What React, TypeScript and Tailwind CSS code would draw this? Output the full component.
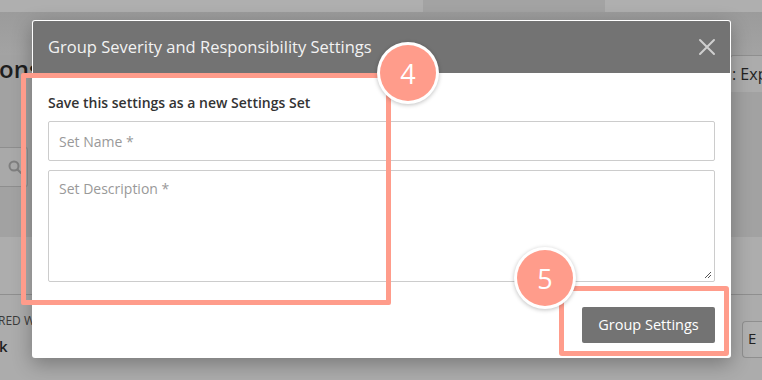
import React from "react";

const font = { fontFamily: '"Open Sans", "Noto Sans", sans-serif' };

function Badge({ n }: { n: string }) {
  return (
    <div className="w-[62px] h-[62px] rounded-full bg-white p-[3px] shadow-[0_1px_4px_rgba(0,0,0,0.25)]">
      <div className="w-full h-full rounded-full bg-[#ff9c8b] flex items-center justify-center text-white text-[27px] leading-none">
        {n}
      </div>
    </div>
  );
}

export default function App() {
  return (
    <div className="relative w-[762px] h-[380px] overflow-hidden bg-[#a2a2a2]" style={font}>
      {/* dimmed background page */}
      <div className="flex flex-col w-full h-full">
        <div className="flex h-[12px] bg-[#afafaf]">
          <div className="w-[423px]" />
          <div className="w-[182px] h-[19px] bg-[#a3a3a3]" />
        </div>
        <div className="h-[43px] bg-gradient-to-b from-[#9b9b9b] to-[#a3a3a3]" />
        <div className="flex h-[28px] items-center justify-between">
          <div className="text-[24px] font-semibold text-[#1e1e1e] -ml-[1px] leading-none">ons</div>
          <div className="h-[37px] w-[32px] mt-[8px] border-t border-l border-[#8f8f8f] rounded-tl-[3px] bg-[#acacac] text-[16px] text-[#222] pl-[1px] pt-[10px] leading-none whitespace-nowrap overflow-hidden">: Exp</div>
        </div>
        <div className="h-[64px]" />
        <div className="flex h-[40px]">
          <div className="w-[28px] h-[40px] border border-l-0 border-[#8e8e8e] rounded-r-[3px] bg-[#a9a9a9] flex items-center justify-center pl-[2px]">
            <svg width="14" height="14" viewBox="0 0 14 14" fill="none" stroke="#7f7f7f" strokeWidth="2">
              <circle cx="6" cy="6" r="4.5" />
              <path d="M9.5 9.5 L13 13" strokeLinecap="round" />
            </svg>
          </div>
        </div>
        <div className="h-[50px]" />
        <div className="h-[58px] bg-[#adadad] border-b border-[#8f8f8f]" />
        <div className="flex-1 bg-[#acacac] flex justify-between">
          <div className="flex flex-col pt-[20px] gap-[12px] leading-none">
            <div className="text-[12px] text-[#3a3a3a] -ml-[2px] whitespace-nowrap">RED W</div>
            <div className="text-[15px] font-semibold text-[#1e1e1e] -ml-[1px]">k</div>
          </div>
          <div className="mt-[26px] w-[20px] h-[37px] border border-r-0 border-[#8f8f8f] rounded-l-[4px] bg-[#b0b0b0] text-[15px] text-[#222] pl-[5px] pt-[9px] leading-none">E</div>
        </div>
      </div>

      {/* modal */}
      <div className="absolute left-[32px] top-[20px] w-[699px] h-[338px] bg-white rounded-[3px] p-[1px] shadow-[0_6px_20px_rgba(0,0,0,0.3)] flex flex-col">
        <div className="h-[52px] bg-[#737373] rounded-t-[2px] flex items-center justify-between pl-[15px] pr-[14px]">
          <div className="text-[16.5px] text-[#f2f2f2] pt-[1px] whitespace-nowrap">Group Severity and Responsibility Settings</div>
          <svg width="18" height="18" viewBox="0 0 18 18" stroke="#cfcfcf" strokeWidth="2" strokeLinecap="round">
            <path d="M2 2 L16 16 M16 2 L2 16" />
          </svg>
        </div>
        <div className="flex flex-col px-[15px] pt-[20px]">
          <div className="text-[14px] font-semibold text-[#333] leading-[20px]">Save this settings as a new Settings Set</div>
          <div className="mt-[8px] h-[40px] border border-[#cccccc] rounded-[2px] flex items-center px-[10px] text-[14px] text-[#999]">
            Set Name *
          </div>
          <div className="relative mt-[9px] h-[112px] border border-[#cccccc] rounded-[2px] px-[10px] pt-[7px] text-[14px] text-[#999]">
            Set Description *
            <svg className="absolute right-[2px] bottom-[2px]" width="9" height="9" viewBox="0 0 9 9" stroke="#555" strokeWidth="1">
              <path d="M8 2 L2 8 M8 5 L5 8" />
            </svg>
          </div>
          <div className="flex justify-end mt-[25px]">
            <div className="h-[36px] w-[133px] bg-[#737373] rounded-[2px] flex items-center justify-center text-[14.5px] text-white">
              Group Settings
            </div>
          </div>
        </div>
      </div>

      {/* annotations */}
      <div className="absolute left-[21px] top-[73px] w-[370px] h-[232px] border-[5px] border-[#ff9c8b] rounded-[2px]" />
      <div className="absolute left-[559px] top-[286px] w-[170px] h-[70px] border-[5px] border-[#ff9c8b] rounded-[3px]" />
      <div className="absolute left-[377px] top-[42px]">
        <Badge n="4" />
      </div>
      <div className="absolute left-[514px] top-[247px]">
        <Badge n="5" />
      </div>
    </div>
  );
}
